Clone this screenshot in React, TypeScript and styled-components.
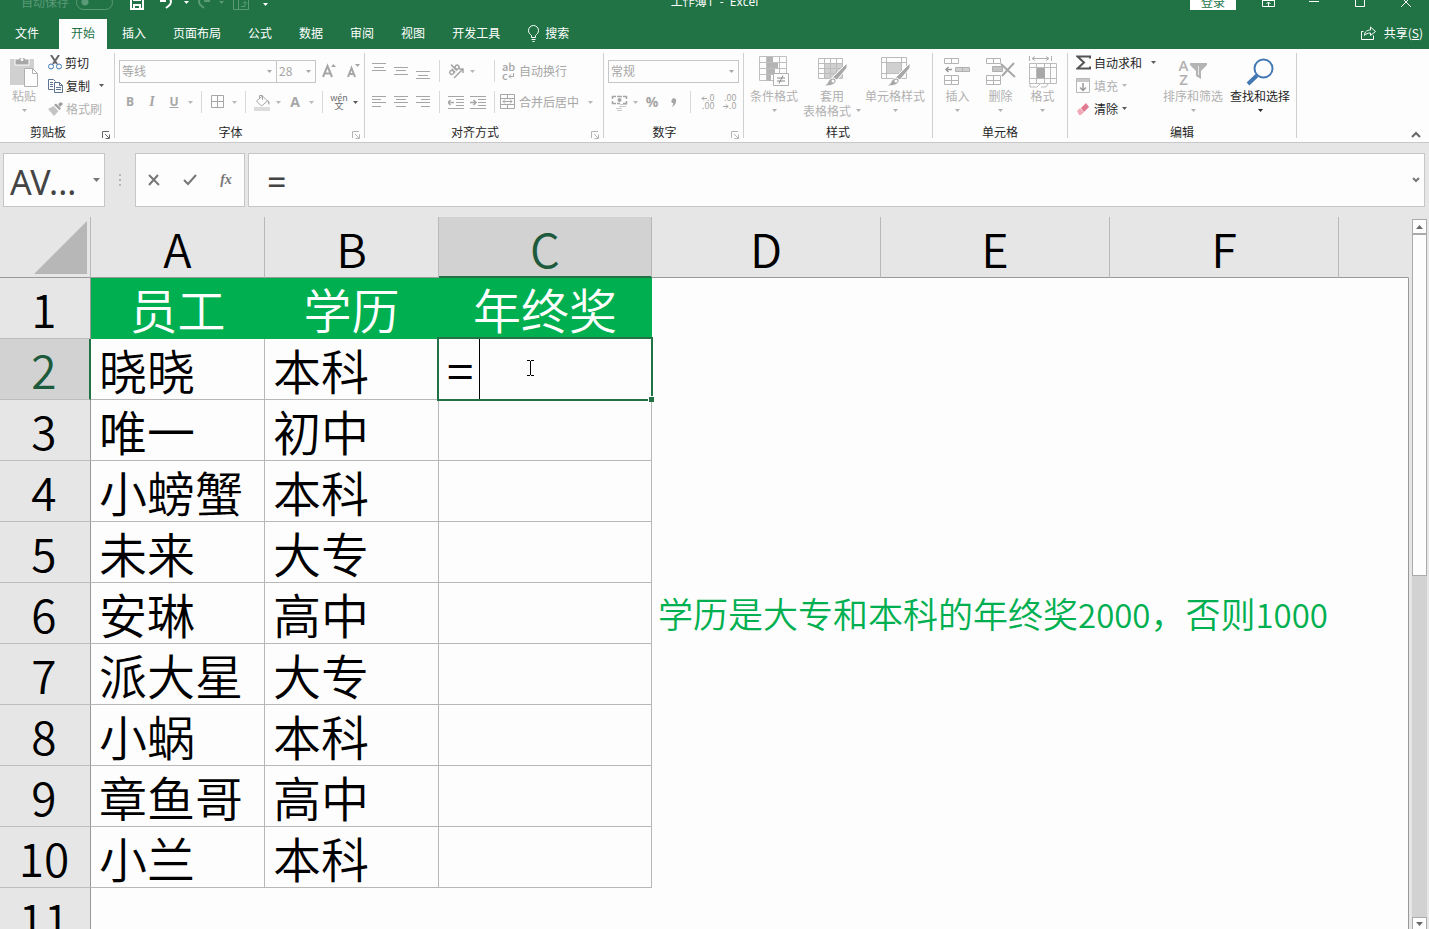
import React from "react";
import styled, { createGlobalStyle, css } from "styled-components";

const cjk = '"Noto Sans CJK SC", "Noto Sans", sans-serif';
const green = "#217346";
const ink = "#262626";
const faded = "#b1b1b1";

const GlobalStyle = createGlobalStyle`
  * { box-sizing: border-box; }
  body { margin: 0; background: #e6e6e6; font: 12px/16px ${cjk}; color: ${ink}; }
  button, input, select { font: inherit; color: inherit; background: none; border: 0; padding: 0; margin: 0; border-radius: 0; }
  svg { display: block; flex: none; }
`;

const Window = styled.div`
  display: flex;
  flex-direction: column;
  height: 100vh;
  overflow: hidden;
`;

/* ---------- title bar ---------- */

const TitleClip = styled.header`
  display: flex;
  align-items: flex-end;
  flex: none;
  height: 19px;
  overflow: hidden;
  background: ${green};
  color: #fff;
`;

const TitleBar = styled.div`
  display: grid;
  grid-template-columns: 1fr auto 1fr;
  align-items: center;
  flex: 1;
  height: 34px;
`;

const QuickAccess = styled.div`
  display: flex;
  align-items: center;
  padding-left: 21px;
`;

const AutoSave = styled.label`
  display: flex;
  align-items: center;
  gap: 7px;
  margin-right: 12px;
  color: #5b9a77;
`;

const Toggle = styled.input`
  appearance: none;
  width: 37px;
  height: 15px;
  margin: 0;
  border: 1px solid #5b9a77;
  border-radius: 8px;
  background: radial-gradient(circle at 8px 6px, #5b9a77 3px, transparent 4px);
`;

const QuickButton = styled.button<{ $w: number; $dim?: boolean }>`
  display: flex;
  align-items: center;
  justify-content: center;
  width: ${(p) => p.$w}px;
  height: 20px;
  color: ${(p) => (p.$dim ? "#5b9a77" : "#fff")};
`;

const Caption = styled.h1`
  margin: 0;
  font: 400 12px/16px "Open Sans", ${cjk};
  white-space: pre;
`;

const WindowButtons = styled.div`
  display: flex;
  justify-content: flex-end;
  align-items: center;
`;

const SignIn = styled.button`
  width: 46px;
  height: 16px;
  margin-right: 9px;
  background: #fff;
  color: ${green};
`;

/* ---------- tabs ---------- */

const TabRow = styled.nav`
  display: flex;
  flex: none;
  gap: 3px;
  height: 30px;
  background: ${green};
  color: #fff;
`;

const Tab = styled.button<{ $active?: boolean }>`
  display: flex;
  align-items: center;
  gap: 5px;
  padding: 0 12px 2px;
  white-space: nowrap;
  ${(p) => p.$active && css`background: #fdfdfd; color: ${green};`}
`;

const FileTab = styled(Tab)`
  padding: 0 17px 2px 15px;
`;

const ShareTab = styled(Tab)`
  gap: 8px;
  margin-left: auto;
  padding: 0 6px 2px;
`;

/* ---------- ribbon ---------- */

const Ribbon = styled.section`
  display: flex;
  flex: none;
  height: 94px;
  padding-top: 2px;
  background: #fdfdfd;
  border-bottom: 1px solid #c8c8c8;
`;

const GroupBox = styled.div<{ $w: number }>`
  display: flex;
  flex-direction: column;
  flex: none;
  width: ${(p) => p.$w}px;
  padding-right: 1px;
  background: linear-gradient(#d0d0d0, #d0d0d0) right 2px / 1px 85px no-repeat;
`;

const GroupBody = styled.div<{ $pad?: number }>`
  display: flex;
  flex: none;
  height: 71px;
  padding-left: ${(p) => p.$pad ?? 0}px;
`;

const GroupFoot = styled.div`
  display: flex;
  align-items: center;
  flex: none;
  height: 20px;
`;

const GroupName = styled.span`
  flex: 1;
  text-align: center;
`;

const Launcher = styled.button<{ $dark?: boolean }>`
  width: 18px;
  height: 16px;
  padding: 5px 0 0 6px;
  color: ${(p) => (p.$dark ? "#666" : "#b4b4b4")};
`;

const Rows = styled.div`
  display: flex;
  flex-direction: column;
`;

const ToolRow = styled.div`
  display: flex;
  align-items: center;
  height: 22px;
  &:first-child { height: 40px; }
`;

const Tool = styled.button<{ $dark?: boolean }>`
  display: flex;
  align-items: center;
  justify-content: center;
  flex: none;
  width: 22px;
  height: 22px;
  color: ${(p) => (p.$dark ? "#6a6a6a" : "#a6a6a6")};
`;

const Drop = styled.button<{ $dark?: boolean }>`
  display: flex;
  align-items: center;
  justify-content: center;
  flex: none;
  width: 11px;
  height: 22px;
  color: ${(p) => (p.$dark ? "#5a5a5a" : "#b8b8b8")};
`;

const Divider = styled.span`
  flex: none;
  width: 1px;
  height: 22px;
  margin: 0 5px;
  background: #d8d8d8;
`;

const Space = styled.span<{ $w: number }>`
  flex: none;
  width: ${(p) => p.$w}px;
`;

const TextTool = styled.button<{ $wide?: boolean }>`
  display: flex;
  align-items: center;
  gap: 3px;
  height: 22px;
  margin-right: ${(p) => (p.$wide ? 6 : 0)}px;
  color: #a6a6a6;
  white-space: nowrap;
`;

const ComboBox = styled.label<{ $w: number }>`
  display: flex;
  align-items: center;
  width: ${(p) => p.$w}px;
  height: 23px;
  padding: 0 4px 0 2px;
  border: 1px solid #c6c6c6;
  color: #a6a6a6;
  & + & { border-left: 0; }
`;

const ComboSelect = styled.select`
  appearance: none;
  flex: 1;
  min-width: 0;
  outline: 0;
`;

const SmallList = styled.div`
  display: flex;
  flex-direction: column;
`;

const SmallTool = styled.button<{ $off?: boolean }>`
  display: flex;
  align-items: center;
  gap: 3px;
  height: 23px;
  color: ${(p) => (p.$off ? faded : ink)};
  white-space: nowrap;
`;

const DropSlot = styled.span<{ $gap: number; $off?: boolean }>`
  margin-left: ${(p) => p.$gap}px;
  color: ${(p) => (p.$off ? "#b8b8b8" : "#5a5a5a")};
`;

const BigTool = styled.button<{ $w: number; $on?: boolean }>`
  display: flex;
  flex-direction: column;
  align-items: center;
  flex: none;
  width: ${(p) => p.$w}px;
  padding-top: 4px;
  line-height: 15px;
  color: ${(p) => (p.$on ? ink : faded)};
  white-space: nowrap;
`;

const BigIcon = styled.span`
  display: flex;
  align-items: center;
  height: 33px;
`;

const BigArrow = styled.span`
  display: flex;
  align-items: center;
  gap: 5px;
  height: 15px;
`;

const Collapse = styled.button`
  align-self: flex-end;
  margin-left: auto;
  padding: 0 8px 4px 0;
  color: #666;
`;

/* ---------- formula bar ---------- */

const FormulaBar = styled.section`
  display: flex;
  flex: none;
  height: 74px;
  padding: 10px 4px 10px 3px;
`;

const Field = styled.div<{ $w?: number }>`
  display: flex;
  align-items: center;
  height: 54px;
  background: #fdfdfd;
  border: 1px solid #c6c6c6;
  color: #777;
  ${(p) => (p.$w ? css`flex: none; width: ${p.$w}px;` : css`flex: 1;`)}
`;

const BigInput = styled.input<{ $pad: number }>`
  flex: 1;
  min-width: 0;
  height: 52px;
  padding: 3px 0 0 ${(p) => p.$pad}px;
  font: 34px/48px "Noto Sans", ${cjk};
  color: #444;
  outline: 0;
`;

const FieldDrop = styled.button`
  padding: 0 4px;
`;

const Grip = styled.span`
  display: flex;
  align-items: center;
  justify-content: center;
  width: 30px;
  color: #b4b4b4;
`;

const FieldTool = styled.button`
  display: flex;
  align-items: center;
  justify-content: center;
  width: 36px;
`;

const FieldGap = styled.span`
  width: 3px;
`;

/* ---------- sheet ---------- */

const SheetArea = styled.main`
  display: flex;
  flex: 1;
  min-height: 0;
`;

const SheetView = styled.div`
  flex: 1;
  min-width: 0;
  overflow: hidden;
`;

const Sheet = styled.table`
  width: 100%;
  table-layout: fixed;
  border-collapse: separate;
  border-spacing: 0;
  color: #000;
  font-weight: 350;
`;

const Col = styled.col<{ $w?: number }>`
  ${(p) => p.$w && css`width: ${p.$w}px;`}
`;

const ColHead = styled.th<{ $active?: boolean; $last?: boolean }>`
  height: 61px;
  padding: 2px 0 0;
  border-right: 1px solid ${(p) => (p.$last ? "transparent" : "#b8b8b8")};
  border-bottom: 1px solid #999;
  font-size: 47px;
  font-weight: 350;
  line-height: 56px;
  ${(p) => p.$active && css`
    background: #d2d2d2;
    border-bottom: 2px solid ${green};
    color: #1e5b3c;
  `}
`;

const Corner = styled(ColHead)`
  padding: 0 3px 3px 0;
  vertical-align: bottom;
  svg { margin-left: auto; }
`;

const RowHead = styled.th<{ $active?: boolean }>`
  height: 61px;
  padding: 0 2px 0 0;
  border-right: 1px solid #999;
  border-bottom: 1px solid #bdbdbd;
  font-size: 46px;
  font-weight: 350;
  line-height: 56px;
  ${(p) => p.$active && css`
    padding-right: 1px;
    background: #d2d2d2;
    border-right: 2px solid ${green};
    color: #1e5b3c;
  `}
`;

const Cell = styled.td<{ $head?: boolean }>`
  position: relative;
  height: 61px;
  padding: 0 0 0 8px;
  background: #fdfdfd;
  border-right: 1px solid #b8b8b8;
  border-bottom: 1px solid #b8b8b8;
  font-size: 48px;
  line-height: 56px;
  white-space: nowrap;
  ${(p) => p.$head && css`
    padding-left: 0;
    background: #00b050;
    border-color: #00b050;
    color: #fff;
    text-align: center;
  `}
`;

const OpenCell = styled.td`
  padding: 0 0 0 6px;
  background: #fdfdfd;
  border-right: 1px solid #999;
  font-size: 35px;
  line-height: 56px;
  color: #00b050;
  white-space: nowrap;
`;

const Digits = styled.span`
  font-size: 33px;
`;

const Selection = styled.div`
  position: absolute;
  inset: -2px;
  z-index: 1;
  border: 2px solid ${green};
`;

const Handle = styled.span`
  position: absolute;
  right: -3px;
  bottom: -3px;
  width: 6px;
  height: 6px;
  background: ${green};
  border: solid #fdfdfd;
  border-width: 1px 0 0 1px;
`;

const Caret = styled.span`
  position: absolute;
  top: 0;
  bottom: 0;
  left: 40px;
  width: 1px;
  background: #000;
`;

const Pointer = styled.span`
  position: absolute;
  top: 21px;
  left: 87px;
`;

const ScrollBar = styled.aside`
  display: flex;
  flex-direction: column;
  flex: none;
  width: 15px;
  margin: 2px 2px 0 3px;
  background: #d2d2d2;
`;

const ScrollButton = styled.button`
  display: flex;
  align-items: center;
  justify-content: center;
  flex: none;
  height: 15px;
  background: #fdfdfd;
  border: 1px solid #ababab;
  color: #6a6a6a;
`;

const ScrollEnd = styled(ScrollButton)`
  height: 12px;
  border-bottom: 0;
`;

const Track = styled.div`
  flex: 1;
`;

const Thumb = styled.div`
  height: 50%;
  background: #fdfdfd;
  border: 1px solid #ababab;
`;

/* ---------- icons ---------- */

type IconProps = { w: number; h: number; children: React.ReactNode };
const Icon = ({ w, h, children }: IconProps) => (
  <svg width={w} height={h} viewBox={`0 0 ${w} ${h}`} fill="none" stroke="currentColor" aria-hidden="true">
    {children}
  </svg>
);

const Arrow = () => (
  <Icon w={5} h={3}><path d="M0 0h5L2.5 3z" fill="currentColor" stroke="none" /></Icon>
);

const BigDown = () => (
  <Icon w={7} h={4}><path d="M0 0h7L3.500 4z" fill="currentColor" stroke="none" /></Icon>
);

const LaunchIcon = () => (
  <Icon w={8} h={8}><path d="M.5 7V.5H7M3 3l4 4M7.500 3.500v4h-4" /></Icon>
);

const Lines = ({ rows }: { rows: [number, number, number][] }) => (
  <Icon w={16} h={16}>
    {rows.map(([x, y, w]) => <path key={y} d={`M${x} ${y}.5h${w}`} />)}
  </Icon>
);

const Undo = () => (
  <Icon w={16} h={16}><path d="M3 2v5h5M3.500 7C6 3 13 3 13 8c0 3-3 4-5 6" strokeWidth="2" /></Icon>
);

const Redo = () => (
  <Icon w={16} h={16}><path d="M13 2v5H8M12.500 7C10 3 3 3 3 8c0 3 3 4 5 6" strokeWidth="2" /></Icon>
);

const PasteIcon = () => (
  <Icon w={28} h={31}>
    <path d="M0 3h24v26H0z" fill="#d0d0d0" stroke="none" />
    <path d="M5 3h4V1.500h6V3h4v6H5z" fill="#a8a8a8" stroke="#fdfdfd" />
    <circle cx="12" cy="3.500" r="1.500" fill="#fdfdfd" stroke="none" />
    <path d="M14.500 12.500h8l5 5v13h-13z" fill="#fdfdfd" stroke="#b0b0b0" />
    <path d="M22.500 12.500v5h5" stroke="#b0b0b0" />
  </Icon>
);

const CutIcon = () => (
  <Icon w={14} h={15}>
    <path d="M3 0l6 9M11 0L5 9" stroke="#666" strokeWidth="2" />
    <circle cx="3" cy="11.500" r="2.500" stroke="#3f78b5" />
    <circle cx="11" cy="11.500" r="2.500" stroke="#3f78b5" />
  </Icon>
);

const CopyIcon = () => (
  <Icon w={15} h={14}>
    <path d="M5.500 10.500h-5V.5h5l2 2" stroke="#5b7391" />
    <path d="M2 3.500h3M2 5.500h3M2 7.500h3" stroke="#5b7391" />
    <path d="M6.500 3.500h5l3 3v7h-8z" fill="#fdfdfd" stroke="#5b7391" />
    <path d="M11.500 3.500v3h3M8 8.500h5M8 10.500h5" stroke="#5b7391" />
  </Icon>
);

const BrushIcon = () => (
  <Icon w={15} h={14}>
    <path d="M10 2l3-2 2 2-3 3zM6 3l2-1.500 5 5L11.500 8z" fill="#a0a0a0" stroke="none" />
    <path d="M0 7l5.500-3 5 5L6 14z" fill="#c4c4c4" stroke="none" />
  </Icon>
);

const GrowA = ({ down }: { down?: boolean }) => (
  <Icon w={16} h={16}>
    <path d={down ? "M4 14l3.500-9 3.500 9M5.500 11h4" : "M1 14L5.500 3 10 14M2.500 10.500h6"} strokeWidth="2" />
    <path d={down ? "M11 1h5l-2.500 3z" : "M9 4h5l-2.500-3z"} fill="currentColor" stroke="none" />
  </Icon>
);

const BordersIcon = () => (
  <Icon w={14} h={14}><path d="M.5.5h12v12H.5zM6.500.5v12M.5 6.500h12" /></Icon>
);

const FillIcon = () => (
  <Icon w={17} h={17}>
    <path d="M2.500 7l6-5 5 5-6 5z" />
    <path d="M5.500 5V1.500h3V6" />
    <path d="M13 6c3 1 3 4 2 5-1-1-1-3-2-5z" fill="currentColor" stroke="none" />
    <path d="M0 13h16v4H0z" fill="#dcdcdc" stroke="none" />
  </Icon>
);

const OrientIcon = () => (
  <Icon w={17} h={17}>
    <g transform="rotate(-45 8 8)">
      <circle cx="4" cy="6" r="2" strokeWidth="1.500" />
      <path d="M6.500 3.500v5M9 0v8.500" strokeWidth="1.500" />
      <circle cx="11.500" cy="6" r="2" strokeWidth="1.500" />
    </g>
    <path d="M6 15l9-9M11 6h4v4" strokeWidth="1.500" />
  </Icon>
);

const IndentIcon = ({ right }: { right?: boolean }) => (
  <Icon w={16} h={14}>
    <path d="M0 1.500h16M8 4.500h8M8 7.500h8M8 10.500h8M0 13.500h16" />
    <path d={right ? "M0 7.500h6M3.500 5L6 7.500 3.500 10" : "M0 7.500h6M2.500 5L0 7.500 2.500 10"} strokeWidth="1.500" />
  </Icon>
);

const WrapGlyph = styled.span`
  display: flex;
  flex-direction: column;
  width: 16px;
  padding-left: 2px;
  font-size: 11px;
  font-weight: 500;
  line-height: 9px;
  text-align: left;
`;

const WrapLine = styled.span`
  display: flex;
  align-items: center;
`;

const MergeIcon = () => (
  <Icon w={16} h={16}>
    <path d="M.5.5h14v14H.5zM.5 4.500h14M.5 10.500h14M7.500.5v4M7.500 10.500v4M3 7.500h9M5 5.500l-2 2 2 2M10 5.500l2 2-2 2" />
  </Icon>
);

const MoneyIcon = () => (
  <Icon w={17} h={17}>
    <path d="M1.500 5V2.500H5M12 2.500h3.500V5M1.500 7v2.500H5M12 9.500h3.500V7M6 2.500h5M6 9.500h3" strokeWidth="1.500" />
    <circle cx="8.500" cy="6" r="2" fill="currentColor" stroke="none" />
    <path d="M9 10.500h7M8 12.500h7M5 14.500h6M6 16.500h5" stroke="#c8c8c8" />
  </Icon>
);

const CommaIcon = () => (
  <Icon w={6} h={9}>
    <path d="M1 1.500C2-.5 6 0 5 4 4.500 6.500 3 8 1 9c1-2 1.500-3 1-4C0 5 0 3 1 1.500z" fill="currentColor" stroke="none" />
  </Icon>
);

const DecimalGlyph = styled.span`
  display: flex;
  flex-direction: column;
  align-items: flex-end;
  width: 15px;
  font-size: 9px;
  line-height: 8px;
`;

const DecimalLine = styled.span`
  display: flex;
  align-items: center;
`;

const TinyArrow = ({ right }: { right?: boolean }) => (
  <Icon w={6} h={5}><path d={right ? "M0 2.500h5M3 .5l2 2-2 2" : "M6 2.500H1M3 .5l-2 2 2 2"} /></Icon>
);

const PinyinGlyph = styled.span`
  display: flex;
  flex-direction: column;
  align-items: center;
  font-size: 9px;
  line-height: 8px;
`;

const Glyph = styled.span<{ $italic?: boolean; $under?: boolean; $size?: number }>`
  font-family: ${(p) => (p.$italic ? '"Liberation Serif", serif' : '"Open Sans", sans-serif')};
  font-size: ${(p) => p.$size ?? 12}px;
  font-weight: 700;
  font-style: ${(p) => (p.$italic ? "italic" : "normal")};
  text-decoration: ${(p) => (p.$under ? "underline" : "none")};
`;

const CondIcon = () => (
  <Icon w={30} h={31}>
    <path d="M.5.5h27v24H.5zM.5 6.500h27M.5 12.500h27M.5 18.500h27M7.500.5v24M20.500.5v24" stroke="#c0c0c0" />
    <path d="M8 1h6v5H8zM8 7h11v5H8zM8 13h8v5H8zM8 19h4v6H8z" fill="#b4b4b4" stroke="none" />
    <path d="M14.500 17.500h15v12h-15z" fill="#fdfdfd" stroke="#b0b0b0" />
    <path d="M18 22h8M18 25h8M24 19.500l-4 8" stroke="#888" />
  </Icon>
);

const BrushOver = () => (
  <>
    <path d="M30 6v5L20 23l-5-2z" fill="#a8a8a8" stroke="#fdfdfd" />
    <path d="M7 29c4-1 4-8 9-8 3 0 4 3 2 5-3 3-8 3-11 3z" fill="#a8a8a8" stroke="#fdfdfd" />
    <circle cx="16" cy="24" r="1.500" fill="#fdfdfd" stroke="none" />
  </>
);

const TableIcon = () => (
  <Icon w={30} h={30}>
    <path d="M7 7h18v14H7z" fill="#d0d0d0" stroke="none" />
    <path d="M1.500 1.500h24v20h-24zM1.500 6.500h24M1.500 11.500h24M1.500 16.500h24M7.500 1.500v20M13.500 1.500v20M19.500 1.500v20" stroke="#bcbcbc" />
    <BrushOver />
  </Icon>
);

const StylesIcon = () => (
  <Icon w={30} h={30}>
    <path d="M7 6h14v11H7z" fill="#d0d0d0" stroke="none" />
    <path d="M1.500.5h25v21h-25zM1.500 5.500h25M1.500 16.500h25M6.500.5v21M21.500.5v21" stroke="#bcbcbc" />
    <BrushOver />
  </Icon>
);

const InsertIcon = () => (
  <Icon w={27} h={28}>
    <path d="M.5.5h14v5H.5zM7.500.5v5M.5 17.500h14v9H.5zM7.500 17.500v9M.5 22.500h14" stroke="#b4b4b4" />
    <path d="M11.500 9.500h14v4h-14zM18.500 9.500v4" fill="#d0d0d0" stroke="#b0b0b0" />
    <path d="M2 11.500h6M4.500 9L2 11.500 4.500 14" stroke="#999" strokeWidth="1.500" />
  </Icon>
);

const DeleteIcon = () => (
  <Icon w={30} h={28}>
    <path d="M.5.5h14v5H.5zM7.500.5v5M.5 17.500h14v9H.5zM7.500 17.500v9M.5 22.500h14" stroke="#b4b4b4" />
    <path d="M6.500 8.500h10v5h-10z" fill="#c4c4c4" stroke="#b0b0b0" />
    <path d="M15 6l14 13M28 5L16 18" stroke="#a8a8a8" strokeWidth="2" />
  </Icon>
);

const FormatIcon = () => (
  <Icon w={28} h={32}>
    <path d="M.5 0v5M22.500 0v5M3 2.500h17M6 .5l-3 2 3 2M17 .5l3 2-3 2" stroke="#b0b0b0" />
    <path d="M.5 7.500h27v20H.5zM.5 11.500h27M.5 22.500h27M7.500 7.500v20M15.500 7.500v20M21.500 7.500v20M1 27v4h7l3-3M12 31h5l2-3" stroke="#bcbcbc" />
    <path d="M8 12h8v10H8z" fill="#a8a8a8" stroke="none" />
  </Icon>
);

const SigmaIcon = () => (
  <Icon w={15} h={15}><path d="M14 3.500V1.500H1.500L8 7.500l-6.500 6H14v-2" stroke="#555" strokeWidth="2" /></Icon>
);

const FillDownIcon = () => (
  <Icon w={15} h={16}>
    <path d="M.5.5h13v14H.5z" stroke="#b8b8b8" />
    <path d="M1 1h12v3H1z" fill="#c8c8c8" stroke="none" />
    <path d="M7 5v7M4 9.500l3 3 3-3" stroke="#999" strokeWidth="1.500" />
  </Icon>
);

const EraserIcon = () => (
  <Icon w={15} h={14}>
    <path d="M5 6l5-5 3 4-5 5z" fill="#e07a92" stroke="none" />
    <path d="M1 9l3-3 4 4-3 3H3z" fill="#efa9b8" stroke="none" />
  </Icon>
);

const SortFunnel = () => (
  <Icon w={17} h={17}>
    <path d="M0 0h17v2l-6 6v8l-5-3V8L0 2z" fill="#b4b4b4" stroke="none" />
    <path d="M8.500 3v9" stroke="#e8e8e8" />
  </Icon>
);

const SortGlyph = styled.span`
  display: flex;
  align-items: center;
  gap: 2px;
`;

const SortLetters = styled.span`
  display: flex;
  flex-direction: column;
  font: 600 15px/14px "Open Sans", sans-serif;
`;

const FindIcon = () => (
  <Icon w={28} h={28}>
    <circle cx="17.500" cy="10.500" r="9" stroke="#4279b4" strokeWidth="2" />
    <path d="M11 17.500L2 26" stroke="#4279b4" strokeWidth="4" />
  </Icon>
);

/* ---------- composed parts ---------- */

type ComboProps = { w: number; label: string; value: string };
const Combo = ({ w, label, value }: ComboProps) => (
  <ComboBox $w={w}>
    <ComboSelect aria-label={label} defaultValue={value}><option>{value}</option></ComboSelect>
    <Arrow />
  </ComboBox>
);

type GroupProps = {
  w: number;
  name: string;
  pad?: number;
  launcher?: "on" | "off";
  children: React.ReactNode;
};
const Group = ({ w, name, pad, launcher, children }: GroupProps) => (
  <GroupBox $w={w}>
    <GroupBody $pad={pad}>{children}</GroupBody>
    <GroupFoot>
      <GroupName>{name}</GroupName>
      {launcher && (
        <Launcher $dark={launcher === "on"} aria-label={`${name}设置`}><LaunchIcon /></Launcher>
      )}
    </GroupFoot>
  </GroupBox>
);

type BigProps = { w: number; icon: React.ReactNode; label: string; second?: string; on?: boolean };
const Big = ({ w, icon, label, second, on }: BigProps) => (
  <BigTool $w={w} $on={on}>
    <BigIcon>{icon}</BigIcon>
    <span>{label}</span>
    <BigArrow>{second}<Arrow /></BigArrow>
  </BigTool>
);

const tabs = ["插入", "页面布局", "公式", "数据", "审阅", "视图", "开发工具"];

const people = [
  ["晓晓", "本科"],
  ["唯一", "初中"],
  ["小螃蟹", "本科"],
  ["未来", "大专"],
  ["安琳", "高中"],
  ["派大星", "大专"],
  ["小蜗", "本科"],
  ["章鱼哥", "高中"],
  ["小兰", "本科"],
];

const columns = ["A", "B", "C", "D", "E", "F"];

export default function App() {
  return (
    <Window>
      <GlobalStyle />
      <TitleClip>
        <TitleBar>
          <QuickAccess>
            <AutoSave>自动保存<Toggle type="checkbox" /></AutoSave>
            <QuickButton $w={24} aria-label="保存">
              <Icon w={14} h={16}><path d="M1 1h12v14H1zM4 1v5h6V1M4 15v-4h6v4" strokeWidth="2" /></Icon>
            </QuickButton>
            <QuickButton $w={34} aria-label="撤消"><Undo /></QuickButton>
            <QuickButton $w={7} aria-label="撤消选项"><Arrow /></QuickButton>
            <QuickButton $w={28} $dim aria-label="恢复"><Redo /></QuickButton>
            <QuickButton $w={7} $dim aria-label="恢复选项"><Arrow /></QuickButton>
            <QuickButton $w={32} $dim aria-label="数据透视表">
              <Icon w={16} h={16}><path d="M.5.5h15v15H.5zM5.500.5v15M.5 5.500h15M8 12.500h4v-5M10 9.500l2-2 2 2" /></Icon>
            </QuickButton>
            <QuickButton $w={16} aria-label="自定义快速访问工具栏">
              <Icon w={5} h={7}><path d="M0 4h5L2.500 7z" fill="currentColor" stroke="none" /></Icon>
            </QuickButton>
          </QuickAccess>
          <Caption>工作薄1  -  Excel</Caption>
          <WindowButtons>
            <SignIn>登录</SignIn>
            <QuickButton $w={46} aria-label="功能区显示选项">
              <Icon w={13} h={10}><path d="M.5.5h12v9H.5zM.5 3.500h12M6.500 5v4M4.500 7l2-2 2 2" /></Icon>
            </QuickButton>
            <QuickButton $w={46} aria-label="最小化"><Icon w={10} h={2}><path d="M0 .5h10" /></Icon></QuickButton>
            <QuickButton $w={46} aria-label="最大化"><Icon w={10} h={10}><path d="M.5.5h9v9h-9z" /></Icon></QuickButton>
            <QuickButton $w={46} aria-label="关闭"><Icon w={10} h={10}><path d="M0 0l10 10M10 0L0 10" /></Icon></QuickButton>
          </WindowButtons>
        </TitleBar>
      </TitleClip>

      <TabRow>
        <FileTab>文件</FileTab>
        <Tab $active>开始</Tab>
        {tabs.map((t) => <Tab key={t}>{t}</Tab>)}
        <Tab>
          <Icon w={13} h={17}>
            <path d="M4.500 12.500v-2C3 9 1.500 8 1.500 5.500a5 5 0 0 1 10 0C11.500 8 10 9 8.500 10.500v2zM4.500 14.500h4M5.500 16.500h2" />
          </Icon>
          搜索
        </Tab>
        <ShareTab>
          <Icon w={15} h={14}>
            <path d="M2.500 5.500h-2v8h12v-4M3.500 9.500c0-4 3-5.500 6-5.500V1l5 4.500-5 4V7c-3 0-4.500 1-6 2.500z" />
          </Icon>
          <span>共享(<u>S</u>)</span>
        </ShareTab>
      </TabRow>

      <Ribbon>
        <Group w={115} name="剪贴板" launcher="on">
          <Big w={48} icon={<PasteIcon />} label="粘贴" />
          <SmallList>
            <SmallTool><CutIcon />剪切</SmallTool>
            <SmallTool><CopyIcon />复制<DropSlot $gap={6}><Arrow /></DropSlot></SmallTool>
            <SmallTool $off><BrushIcon />格式刷</SmallTool>
          </SmallList>
        </Group>

        <Group w={250} name="字体" pad={4} launcher="off">
          <Rows>
            <ToolRow>
              <Combo w={158} label="字体" value="等线" />
              <Combo w={39} label="字号" value="28" />
              <Space $w={3} />
              <Tool aria-label="增大字号"><GrowA /></Tool>
              <Tool aria-label="减小字号"><GrowA down /></Tool>
            </ToolRow>
            <ToolRow>
              <Tool><Glyph>B</Glyph></Tool>
              <Tool><Glyph $italic $size={14}>I</Glyph></Tool>
              <Tool><Glyph $under>U</Glyph></Tool>
              <Drop aria-label="下划线选项"><Arrow /></Drop>
              <Divider />
              <Tool aria-label="边框"><BordersIcon /></Tool>
              <Drop aria-label="边框选项"><Arrow /></Drop>
              <Divider />
              <Tool aria-label="填充颜色"><FillIcon /></Tool>
              <Drop aria-label="填充颜色选项"><Arrow /></Drop>
              <Tool><Glyph $size={14}>A</Glyph></Tool>
              <Drop aria-label="字体颜色选项"><Arrow /></Drop>
              <Divider />
              <Tool $dark><PinyinGlyph><span>wén</span><span>文</span></PinyinGlyph></Tool>
              <Drop $dark aria-label="拼音选项"><Arrow /></Drop>
            </ToolRow>
          </Rows>
        </Group>

        <Group w={239} name="对齐方式" pad={3} launcher="off">
          <Rows>
            <ToolRow>
              <Tool aria-label="顶端对齐"><Lines rows={[[1, 0, 14], [3, 4, 10], [1, 7, 14]]} /></Tool>
              <Tool aria-label="垂直居中"><Lines rows={[[1, 4, 14], [3, 7, 10], [1, 11, 14]]} /></Tool>
              <Tool aria-label="底端对齐"><Lines rows={[[1, 8, 14], [3, 12, 10], [1, 15, 14]]} /></Tool>
              <Divider />
              <Tool aria-label="方向"><OrientIcon /></Tool>
              <Drop aria-label="方向选项"><Arrow /></Drop>
              <Space $w={11} />
              <Divider />
              <TextTool>
                <WrapGlyph>
                  <span>ab</span>
                  <WrapLine>c<Icon w={6} h={6}><path d="M5.500 0v3.500H1M3 1.500l-2 2 2 2" /></Icon></WrapLine>
                </WrapGlyph>
                自动换行
              </TextTool>
            </ToolRow>
            <ToolRow>
              <Tool aria-label="左对齐"><Lines rows={[[1, 2, 14], [1, 5, 9], [1, 8, 14], [1, 12, 9]]} /></Tool>
              <Tool aria-label="居中"><Lines rows={[[1, 2, 14], [3, 5, 10], [1, 8, 14], [3, 12, 10]]} /></Tool>
              <Tool aria-label="右对齐"><Lines rows={[[1, 2, 14], [6, 5, 9], [1, 8, 14], [6, 12, 9]]} /></Tool>
              <Divider />
              <Tool aria-label="减少缩进量"><IndentIcon /></Tool>
              <Tool aria-label="增加缩进量"><IndentIcon right /></Tool>
              <Divider />
              <TextTool $wide><MergeIcon />合并后居中</TextTool>
              <Drop aria-label="合并选项"><Arrow /></Drop>
            </ToolRow>
          </Rows>
        </Group>

        <Group w={140} name="数字" pad={4} launcher="off">
          <Rows>
            <ToolRow><Combo w={131} label="数字格式" value="常规" /></ToolRow>
            <ToolRow>
              <Tool aria-label="会计数字格式"><MoneyIcon /></Tool>
              <Drop aria-label="会计格式选项"><Arrow /></Drop>
              <Tool><Glyph $size={14}>%</Glyph></Tool>
              <Tool aria-label="千位分隔样式"><CommaIcon /></Tool>
              <Divider />
              <Tool>
                <DecimalGlyph><DecimalLine><TinyArrow />.0</DecimalLine><DecimalLine>.00</DecimalLine></DecimalGlyph>
              </Tool>
              <Tool>
                <DecimalGlyph><DecimalLine>.00</DecimalLine><DecimalLine><TinyArrow right />.0</DecimalLine></DecimalGlyph>
              </Tool>
            </ToolRow>
          </Rows>
        </Group>

        <Group w={189} name="样式">
          <Big w={60} icon={<CondIcon />} label="条件格式" />
          <Big w={56} icon={<TableIcon />} label="套用" second="表格格式" />
          <Big w={70} icon={<StylesIcon />} label="单元格样式" />
        </Group>

        <Group w={135} name="单元格" pad={3}>
          <Big w={43} icon={<InsertIcon />} label="插入" />
          <Big w={43} icon={<DeleteIcon />} label="删除" />
          <Big w={41} icon={<FormatIcon />} label="格式" />
        </Group>

        <Group w={229} name="编辑" pad={8}>
          <SmallList>
            <SmallTool><SigmaIcon />自动求和<DropSlot $gap={6}><Arrow /></DropSlot></SmallTool>
            <SmallTool $off><FillDownIcon />填充<DropSlot $gap={1} $off><Arrow /></DropSlot></SmallTool>
            <SmallTool><EraserIcon />清除<DropSlot $gap={1}><Arrow /></DropSlot></SmallTool>
          </SmallList>
          <Big
            w={74}
            icon={<SortGlyph><SortLetters><span>A</span><span>Z</span></SortLetters><SortFunnel /></SortGlyph>}
            label="排序和筛选"
          />
          <Big w={60} icon={<FindIcon />} label="查找和选择" on />
        </Group>

        <Collapse aria-label="折叠功能区"><Icon w={10} h={7}><path d="M1 6l4-4 4 4" strokeWidth="2" /></Icon></Collapse>
      </Ribbon>

      <FormulaBar>
        <Field $w={102}>
          <BigInput $pad={6} aria-label="名称框" defaultValue="AV..." />
          <FieldDrop aria-label="名称列表"><BigDown /></FieldDrop>
        </Field>
        <Grip><Icon w={2} h={12}><path d="M0 1h2M0 6h2M0 11h2" strokeWidth="2" /></Icon></Grip>
        <Field $w={110}>
          <FieldTool aria-label="取消"><Icon w={12} h={12}><path d="M1 1l10 10M10 1L1 11" strokeWidth="2" /></Icon></FieldTool>
          <FieldTool aria-label="输入"><Icon w={14} h={12}><path d="M1 6l4 4 8-9" strokeWidth="2" /></Icon></FieldTool>
          <FieldTool><Glyph $italic $size={14}>fx</Glyph></FieldTool>
        </Field>
        <FieldGap />
        <Field>
          <BigInput $pad={18} aria-label="编辑栏" defaultValue="=" />
          <FieldDrop aria-label="展开编辑栏"><Icon w={8} h={6}><path d="M1 1l3 3 3-3" strokeWidth="2" /></Icon></FieldDrop>
        </Field>
      </FormulaBar>

      <SheetArea>
        <SheetView>
          <Sheet>
            <colgroup>
              <Col $w={91} /><Col $w={174} /><Col $w={174} /><Col $w={213} />
              <Col $w={229} /><Col $w={229} /><Col $w={229} /><Col />
            </colgroup>
            <thead>
              <tr>
                <Corner aria-label="全选">
                  <Icon w={53} h={53}><path d="M53 0v53H0z" fill="#b7b7b7" stroke="none" /></Icon>
                </Corner>
                {columns.map((c) => <ColHead key={c} scope="col" $active={c === "C"}>{c}</ColHead>)}
                <ColHead $last />
              </tr>
            </thead>
            <tbody>
              <tr>
                <RowHead scope="row">1</RowHead>
                <Cell $head>员工</Cell>
                <Cell $head>学历</Cell>
                <Cell $head>年终奖</Cell>
                <OpenCell colSpan={4} />
              </tr>
              {people.map(([name, degree], i) => (
                <tr key={name}>
                  <RowHead scope="row" $active={i === 0}>{i + 2}</RowHead>
                  <Cell>{name}</Cell>
                  <Cell>{degree}</Cell>
                  <Cell>
                    {i === 0 && (
                      <>
                        =
                        <Caret />
                        <Pointer>
                          <Icon w={9} h={16}><path d="M1 .5h3M5 .5h3M4.500 1v14M1 15.500h3M5 15.500h3" stroke="#000" /></Icon>
                        </Pointer>
                        <Selection><Handle /></Selection>
                      </>
                    )}
                  </Cell>
                  <OpenCell colSpan={4}>
                    {i === 4 && (
                      <>学历是大专和本科的年终奖<Digits>2000</Digits>，否则<Digits>1000</Digits></>
                    )}
                  </OpenCell>
                </tr>
              ))}
              <tr>
                <RowHead scope="row">11</RowHead>
                <OpenCell colSpan={7} />
              </tr>
            </tbody>
          </Sheet>
        </SheetView>
        <ScrollBar>
          <ScrollButton aria-label="向上滚动"><Icon w={7} h={4}><path d="M0 4h7L3.500 0z" fill="currentColor" stroke="none" /></Icon></ScrollButton>
          <Track><Thumb /></Track>
          <ScrollEnd aria-label="向下滚动"><BigDown /></ScrollEnd>
        </ScrollBar>
      </SheetArea>
    </Window>
  );
}
